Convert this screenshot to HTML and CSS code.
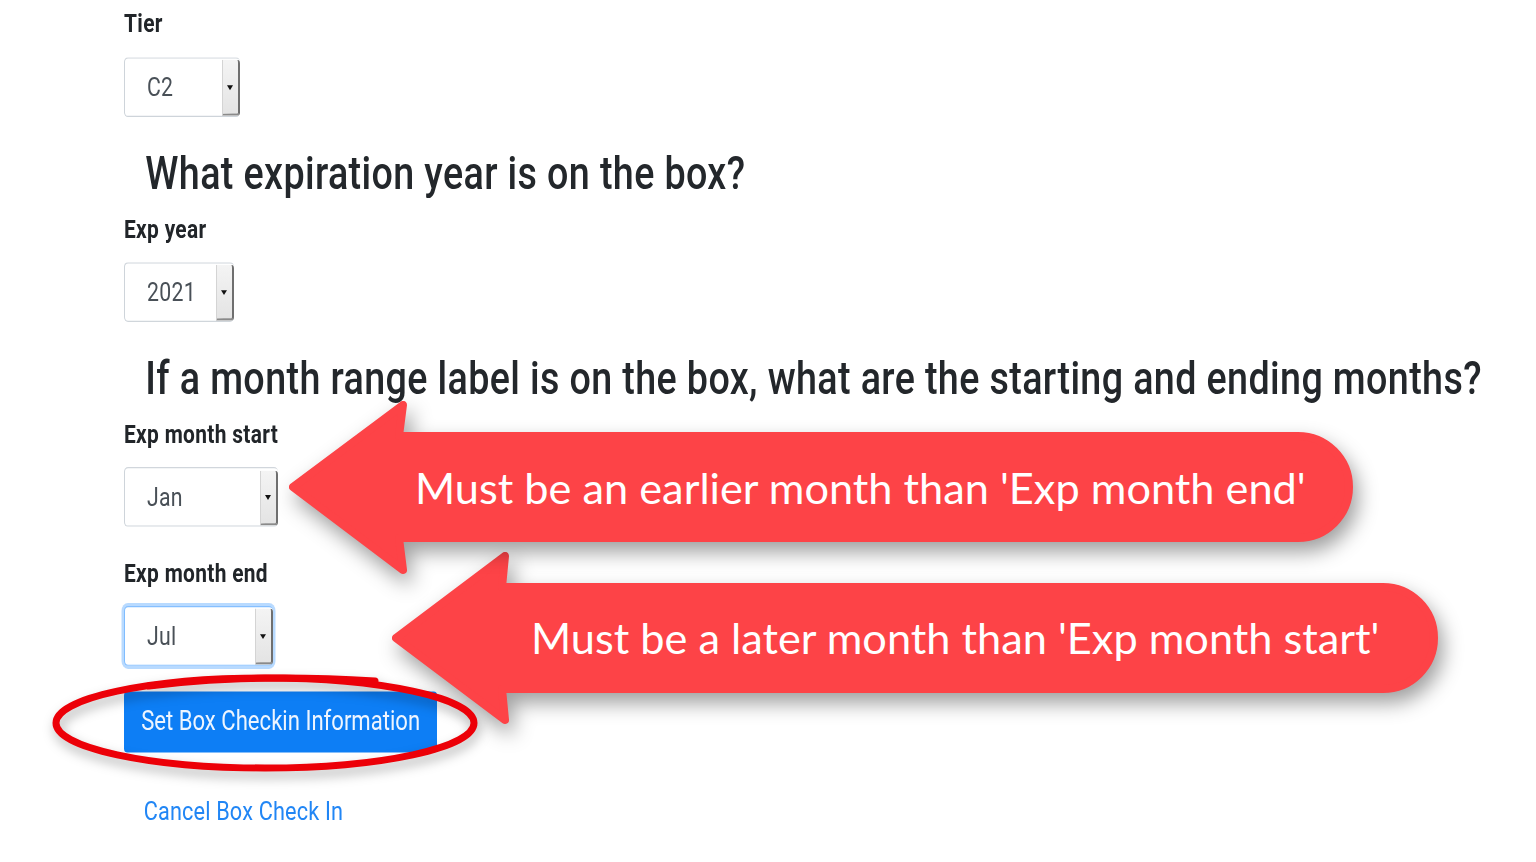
FILE: index.html
```html
<!DOCTYPE html>
<html lang="en">
<head>
<meta charset="utf-8">
<title>Box Check In</title>
<link rel="stylesheet" href="styles.css">
</head>
<body>
<div class="page">
  <form class="form">
    <label class="label">Tier</label>
    <div class="select select-tier"><span class="value">C2</span><span class="caret"></span></div>

    <h3 class="question">What expiration year is on the box?</h3>

    <label class="label label-after-q">Exp year</label>
    <div class="select select-year"><span class="value">2021</span><span class="caret"></span></div>

    <h3 class="question">If a month range label is on the box, what are the starting and ending months?</h3>

    <label class="label label-after-q">Exp month start</label>
    <div class="select select-month"><span class="value">Jan</span><span class="caret"></span></div>

    <label class="label label-after-select">Exp month end</label>
    <div class="select select-month select-focus"><span class="value">Jul</span><span class="caret"></span></div>

    <button type="button" class="btn-primary">Set Box Checkin Information</button>

    <a class="cancel-link" href="#">Cancel Box Check In</a>
  </form>
</div>

<div class="callout callout-end">
  <svg class="callout-shape" width="1050" height="180" viewBox="0 0 1050 180">
    <path d="M8 90 L117 8 L114 39 L995 39 A51 51 0 0 1 995 141 L114 141 L117 172 Z"/>
  </svg>
  <span class="callout-text">Must be a later month than 'Exp month start'</span>
</div>

<div class="callout callout-start">
  <svg class="callout-shape" width="1068" height="181" viewBox="0 0 1068 181">
    <path d="M8 90 L118 8 L114 39 L1013 39 A51 51 0 0 1 1013 141 L114 141 L118 173 Z"/>
  </svg>
  <span class="callout-text">Must be an earlier month than 'Exp month end'</span>
</div>

<svg class="ring" width="440" height="110" viewBox="0 0 440 110">
  <ellipse cx="220" cy="53" rx="209" ry="45"/>
  <path d="M104 16 Q205 3 330 11"/>
</svg>
</body>
</html>
```

FILE: styles.css
```css
html, body {
  margin: 0;
  padding: 0;
  background: #ffffff;
  overflow: hidden;
}

body {
  position: relative;
  width: 1536px;
  height: 862px;
  font-family: Roboto, "Liberation Sans", Arial, sans-serif;
  color: #212529;
}

/* The captured page is stretched vertically (narrow-looking text):
   lay it out at true width and stretch it vertically. */
.page {
  transform: scaleY(1.2195);
  transform-origin: 0 0;
}

.form {
  display: flex;
  flex-direction: column;
  align-items: flex-start;
  padding: 8.2px 0 0 124px;
}

.label {
  display: block;
  font-size: 20.9px;
  line-height: 23.8px;
  font-weight: 700;
  letter-spacing: 0.33px;
  color: #212529;
  margin-bottom: 13.9px;
}

.form > .label:first-child {
  margin-bottom: 14.8px;
}

.label-after-q {
  margin-top: 13.1px;
}

.label-after-select {
  margin-top: 27.1px;
}

.question {
  margin: 23.8px 0 0 21.3px;
  font-size: 37.7px;
  line-height: 44.3px;
  font-weight: 500;
  letter-spacing: 0.37px;
  color: #23272b;
  white-space: nowrap;
}

.select {
  display: flex;
  align-items: stretch;
  height: 49.2px;
  box-sizing: border-box;
  border: 1px solid #ced4da;
  border-right: none;
  border-radius: 4px;
  background: #ffffff;
}

.select-tier { width: 116px; }
.select-year { width: 110px; }
.select-month { width: 154px; }

.select-focus {
  width: 149px;
  border-color: #80bdff;
  box-shadow: 0 0 0 2.5px rgba(0, 123, 255, 0.28);
}

.value {
  flex: 1;
  display: flex;
  align-items: center;
  padding-left: 22px;
  font-size: 21.3px;
  letter-spacing: 0.25px;
  color: #495057;
}

.caret {
  position: relative;
  width: 14.8px;
  margin-top: 1.6px;
  background: linear-gradient(#f4f4f4, #e4e4e4);
  border-left: 1px solid #d4d4d4;
  border-right: 2.5px solid #6f6f6f;
  border-bottom: 2.5px solid #8a8a8a;
  border-radius: 0 3px 3px 0;
}

.caret::after {
  content: "";
  position: absolute;
  left: 50%;
  top: 50%;
  margin: -1.6px 0 0 -3.3px;
  border-left: 3.3px solid transparent;
  border-right: 3.3px solid transparent;
  border-top: 4.1px solid #111;
}

.btn-primary {
  margin-top: 21.3px;
  width: 313px;
  height: 49.2px;
  padding: 0 0 1.6px 17.2px;
  text-align: left;
  font-family: Roboto, "Liberation Sans", Arial, sans-serif;
  font-size: 22.1px;
  color: #eef5ff;
  background: #0d7ef5;
  border: none;
  border-radius: 3.3px;
}

.cancel-link {
  margin: 36.9px 0 0 19.7px;
  font-size: 21.7px;
  line-height: 24.6px;
  letter-spacing: 0.16px;
  color: #2186f5;
  text-decoration: none;
}

/* Annotation callouts drawn over the page */
.callout {
  position: absolute;
  display: flex;
  align-items: center;
  box-sizing: border-box;
}

.callout-start {
  left: 285px;
  top: 397px;
  width: 1068px;
  height: 181px;
  padding-left: 130px;
}

.callout-end {
  left: 388px;
  top: 548px;
  width: 1050px;
  height: 180px;
  padding-left: 143px;
}

.callout-shape {
  position: absolute;
  left: 0;
  top: 0;
  overflow: visible;
  filter: drop-shadow(5px 10px 10px rgba(0, 0, 0, 0.38));
}

.callout-shape path {
  fill: #fd4347;
  stroke: #fd4347;
  stroke-width: 8;
  stroke-linejoin: round;
}

.callout-text {
  position: relative;
  font-family: Lato, "Open Sans", sans-serif;
  font-size: 43.3px;
  color: #ffffff;
  white-space: nowrap;
  line-height: 1;
}

.ring {
  position: absolute;
  left: 45px;
  top: 670px;
  overflow: visible;
  filter: drop-shadow(2px 6px 6px rgba(0, 0, 0, 0.3));
}

.ring ellipse,
.ring path {
  fill: none;
  stroke: #ec0008;
  stroke-width: 7;
  stroke-linecap: round;
}
```
